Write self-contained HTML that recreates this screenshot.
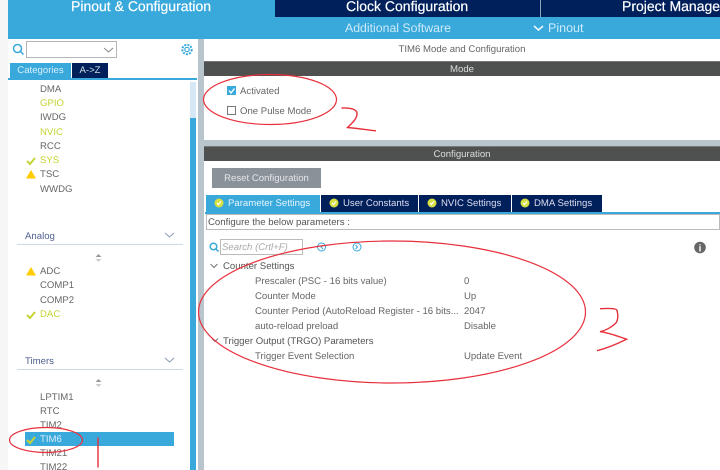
<!DOCTYPE html>
<html><head><meta charset="utf-8">
<style>
html,body{margin:0;padding:0;background:#fff}
#p{position:relative;width:720px;height:470px;overflow:hidden;background:#fff;font-family:"Liberation Sans",sans-serif;font-size:9.6px;color:#666;text-rendering:geometricPrecision;filter:blur(.35px)}
#p div{position:absolute;white-space:nowrap}
.t{line-height:14px;height:14px}
.g{color:#c6d335}
.h{color:#fff;font-size:14px;line-height:14px;top:-1px;-webkit-text-stroke:.2px #fff}
.bar{background:#4e5150;color:#ddd;text-align:center;line-height:15px;left:204px;width:516px;height:14px;border-top:1px solid #777}
.tab{top:195px;height:17px;background:#00205c;color:#dde;line-height:18px;box-sizing:border-box;padding-left:22px}
.d{color:#555}
svg{position:absolute;left:0;top:0}
</style></head><body><div id="p">
<div style="left:0;top:0;width:8px;height:470px;background:#f6f6f6"></div>
<div style="left:8px;top:0;width:712px;height:39px;background:#39a9dc"></div>
<div style="left:275px;top:0;width:445px;height:17px;background:#00205c"></div>
<div style="left:540px;top:0;width:1px;height:17px;background:#8ea3bd"></div>
<div class="h" style="left:71px">Pinout &amp; Configuration</div>
<div class="h" style="left:346px">Clock Configuration</div>
<div class="h" style="left:622px">Project Manager</div>
<div style="left:345px;top:21px;font-size:12.300px;line-height:15px;color:#cdeaf8">Additional Software</div>
<div style="left:548px;top:21px;font-size:12.500px;line-height:15px;color:#cdeaf8">Pinout</div>

<div style="left:198px;top:39px;width:6px;height:431px;background:#b8c5cc"></div>
<div style="left:190px;top:82px;width:6px;height:388px;background:#d6e8f5"></div>
<div style="left:190px;top:118px;width:6px;height:352px;background:#39a9dc"></div>
<div style="left:26px;top:41px;width:91px;height:17px;border:1px solid #b5b5b5;box-sizing:border-box;background:#fff"></div>
<div style="left:10px;top:63px;width:61px;height:15px;background:#39a9dc;color:#d8eef9;line-height:16px;text-align:center">Categories</div>
<div style="left:72px;top:63px;width:36px;height:15px;background:#00205c;color:#cdd;line-height:16px;text-align:center">A-&gt;Z</div>
<div style="left:8px;top:78px;width:189px;height:2px;background:#39a9dc"></div>

<div class="t" style="left:40px;top:83px">DMA</div>
<div class="t g" style="left:40px;top:97px">GPIO</div>
<div class="t" style="left:40px;top:111px">IWDG</div>
<div class="t g" style="left:40px;top:126px">NVIC</div>
<div class="t" style="left:40px;top:140px">RCC</div>
<div class="t g" style="left:40px;top:154px">SYS</div>
<div class="t" style="left:40px;top:168px">TSC</div>
<div class="t" style="left:40px;top:183px">WWDG</div>
<div class="t" style="left:25px;top:230px;color:#4f5f8f">Analog</div>
<div style="left:17px;top:244px;width:166px;height:1px;background:#cdd9e6"></div>
<div class="t" style="left:40px;top:265px">ADC</div>
<div class="t" style="left:40px;top:279px">COMP1</div>
<div class="t" style="left:40px;top:294px">COMP2</div>
<div class="t g" style="left:40px;top:308px">DAC</div>
<div class="t" style="left:25px;top:355px;color:#4f5f8f">Timers</div>
<div style="left:17px;top:369px;width:166px;height:1px;background:#cdd9e6"></div>
<div class="t" style="left:40px;top:391px">LPTIM1</div>
<div class="t" style="left:40px;top:405px">RTC</div>
<div class="t" style="left:40px;top:419px">TIM2</div>
<div style="left:25px;top:432px;width:149px;height:14px;background:#39a9dc"></div>
<div class="t" style="left:40px;top:433px;color:#d8eef9">TIM6</div>
<div class="t" style="left:40px;top:447px">TIM21</div>
<div class="t" style="left:40px;top:461px">TIM22</div>

<div style="left:204px;top:44px;width:516px;text-align:center;line-height:12px">TIM6 Mode and Configuration</div>
<div class="bar" style="top:61px">Mode</div>
<div style="left:204px;top:140px;width:516px;height:6px;background:#b8c5cc"></div>
<div class="bar" style="top:146px">Configuration</div>
<div style="left:227px;top:86px;width:9px;height:9px;background:#39a9dc"></div>
<div class="t" style="left:240px;top:85px">Activated</div>
<div style="left:227px;top:106px;width:7px;height:7px;border:1px solid #777"></div>
<div class="t" style="left:240px;top:105px">One Pulse Mode</div>

<div style="left:212px;top:168px;width:109px;height:20px;background:#8a9299;color:#e4e6e8;line-height:21px;text-align:center">Reset Configuration</div>
<div class="tab" style="left:206px;width:114px;background:#39a9dc;color:#e6f5fc">Parameter Settings</div>
<div class="tab" style="left:321px;width:97px">User Constants</div>
<div class="tab" style="left:419px;width:92px">NVIC Settings</div>
<div class="tab" style="left:512px;width:90px">DMA Settings</div>
<div style="left:205px;top:212px;width:515px;height:2px;background:#39a9dc"></div>
<div style="left:206px;top:214px;width:514px;height:16px;border:1px solid #bbb;box-sizing:border-box;line-height:15px;padding-left:1px;color:#555">Configure the below parameters :</div>
<div style="left:220px;top:239px;width:83px;height:16px;border:1px solid #bbb;box-sizing:border-box;line-height:15px;padding-left:1px;font-style:italic;color:#aaa">Search (Crtl+F)</div>

<div class="t d" style="left:223px;top:260px">Counter Settings</div>
<div class="t" style="left:255px;top:275px">Prescaler (PSC - 16 bits value)</div>
<div class="t" style="left:255px;top:290px">Counter Mode</div>
<div class="t" style="left:255px;top:305px">Counter Period (AutoReload Register - 16 bits...</div>
<div class="t" style="left:255px;top:320px">auto-reload preload</div>
<div class="t d" style="left:223px;top:335px">Trigger Output (TRGO) Parameters</div>
<div class="t" style="left:255px;top:350px">Trigger Event Selection</div>
<div class="t" style="left:464px;top:275px">0</div>
<div class="t" style="left:464px;top:290px">Up</div>
<div class="t" style="left:464px;top:305px">2047</div>
<div class="t" style="left:464px;top:320px">Disable</div>
<div class="t" style="left:464px;top:350px">Update Event</div>

<svg width="720" height="470" viewBox="0 0 720 470" fill="none">
<g stroke="#e6f6fc" stroke-width="1.6"><path d="M534 26l4.500 4 4.500-4"/></g>
<g stroke="#39a9dc" stroke-width="1.500"><circle cx="17.500" cy="48.500" r="4"/><path d="M20.500 51.500l3 3"/><circle cx="213.500" cy="246.500" r="3.300"/><path d="M216 249l2.500 2.500"/></g>
<path d="M104 48l4.500 4 4.500-4" stroke="#888"/>
<g stroke="#39a9dc"><circle cx="187" cy="49.500" r="2.200" stroke-width="1.200"/><circle cx="187" cy="49.500" r="4.700" stroke-width="2" stroke-dasharray="2 1.200"/></g>
<path d="M229 90.500l2 2.500 3.500-4.500" stroke="#fff" stroke-width="1.400"/>
<g stroke="#c6d335" stroke-width="2"><path d="M27 161l3 3 5-6"/><path d="M27 315l3 3 5-6"/><path d="M27 440l3 3 5-6"/></g>
<g fill="#ffcc00"><path d="M31 170l5 8.500h-10z"/><path d="M31 267l5 8.500h-10z"/></g>
<g stroke="#8a9ab5"><path d="M165 233l4.500 4 4.500-4"/><path d="M165 358l4.500 4 4.500-4"/></g>
<g fill="#999"><path d="M98.500 254l3 3h-6z"/><path d="M98.500 379l3 3h-6z"/></g>
<g fill="#ccc"><path d="M98.500 262l3-3h-6z"/><path d="M98.500 387l3-3h-6z"/></g>
<g fill="#d6e040"><circle cx="219" cy="203" r="4.500"/><circle cx="334" cy="203" r="4.500"/><circle cx="432" cy="203" r="4.500"/><circle cx="525" cy="203" r="4.500"/></g>
<g stroke="#fff" stroke-width="1.300"><path d="M217 203l1.500 1.500 2.500-3"/><path d="M332 203l1.500 1.500 2.500-3"/><path d="M430 203l1.500 1.500 2.500-3"/><path d="M523 203l1.500 1.500 2.500-3"/></g>
<g stroke="#39a9dc"><circle cx="321.500" cy="247" r="4"/><circle cx="357" cy="247" r="4"/><path d="M323 245l-2 2 2 2M355.500 245l2 2-2 2"/></g>
<circle cx="700" cy="247.500" r="5.800" fill="#666"/>
<text x="700" y="251.500" font-family="Liberation Sans" font-size="10" font-weight="bold" fill="#fff" text-anchor="middle">i</text>
<g stroke="#777"><path d="M210.500 264l3.500 3.500 3.500-3.500"/><path d="M212 338.500l3 3 3-3"/></g>
<g stroke="#e8303c" stroke-width="1.200">
<ellipse cx="270" cy="99.500" rx="66.500" ry="25"/>
<ellipse cx="392" cy="312" rx="193.500" ry="71"/>
<ellipse cx="46" cy="440" rx="36.500" ry="12.500"/>
<path stroke-width="1.400" d="M98 437.500v30"/>
<path stroke-width="1.400" d="M341.500 108c8-.5 15 1 15.500 5 .5 6-6 11-9.500 14.500 8 .5 20 2.500 28.500 3.300"/>
<path stroke-width="1.400" d="M600 308.700c8-.5 16-.5 17 1.500 1 4 1 9-.5 12-3 4-11 8.500-16.500 9.500 9 1 19 5 26.500 7.500-9 4.500-20 9-29.500 11.500"/>
</g>
</svg>
</div></body></html>
